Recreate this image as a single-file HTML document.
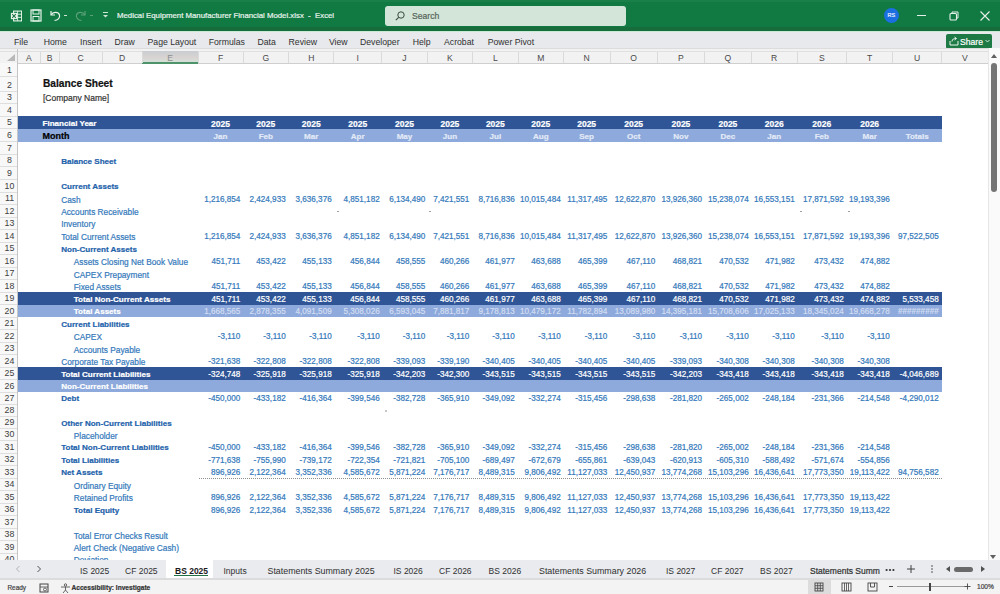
<!DOCTYPE html><html><head><meta charset="utf-8"><style>
*{margin:0;padding:0;box-sizing:border-box}
html,body{width:1000px;height:594px;overflow:hidden;background:#fff;font-family:"Liberation Sans", sans-serif}
.a{position:absolute;white-space:nowrap}
.t{position:absolute;white-space:nowrap;line-height:1;-webkit-text-stroke:0.2px currentColor}
.n{-webkit-text-stroke:0}

</style></head><body>
<div class="a" style="left:0;top:0;width:1000px;height:31px;background:#117a43"></div>
<div class="a" style="left:0;top:0;width:1000px;height:2px;background:#1a8049"></div>
<div class="a" style="left:0;top:27px;width:1000px;height:3.5px;background:#176c3c"></div>
<div class="a" style="left:0;top:30.5px;width:1000px;height:1px;background:#b8e2c6"></div>
<div class="a" style="left:0;top:31px;width:1000px;height:17px;background:#e7e9ec"></div>
<div class="a" style="left:0;top:30.8px;width:1000px;height:1px;background:#c9ead5"></div>
<div class="t n" style="left:14px;top:37.7px;font-size:8.7px;color:#303030">File</div>
<div class="t n" style="left:43.7px;top:37.7px;font-size:8.7px;color:#303030">Home</div>
<div class="t n" style="left:80px;top:37.7px;font-size:8.7px;color:#303030">Insert</div>
<div class="t n" style="left:114.5px;top:37.7px;font-size:8.7px;color:#303030">Draw</div>
<div class="t n" style="left:147.5px;top:37.7px;font-size:8.7px;color:#303030">Page Layout</div>
<div class="t n" style="left:208.7px;top:37.7px;font-size:8.7px;color:#303030">Formulas</div>
<div class="t n" style="left:257.4px;top:37.7px;font-size:8.7px;color:#303030">Data</div>
<div class="t n" style="left:288.6px;top:37.7px;font-size:8.7px;color:#303030">Review</div>
<div class="t n" style="left:328.9px;top:37.7px;font-size:8.7px;color:#303030">View</div>
<div class="t n" style="left:360px;top:37.7px;font-size:8.7px;color:#303030">Developer</div>
<div class="t n" style="left:412.7px;top:37.7px;font-size:8.7px;color:#303030">Help</div>
<div class="t n" style="left:444px;top:37.7px;font-size:8.7px;color:#303030">Acrobat</div>
<div class="t n" style="left:487.7px;top:37.7px;font-size:8.7px;color:#303030">Power Pivot</div>
<div class="t" style="left:117px;top:11.5px;font-size:7.8px;color:#e8f3ec">Medical Equipment Manufacturer Financial Model.xlsx&nbsp; - &nbsp;Excel</div>
<div class="a" style="left:385px;top:5.5px;width:240.5px;height:20.5px;background:#d3e4d8;border-radius:3px"></div>
<svg class="a" style="left:394px;top:10px" width="12" height="12" viewBox="0 0 12 12"><circle cx="7" cy="5" r="3.2" fill="none" stroke="#3b4a40" stroke-width="1"/><line x1="4.7" y1="7.3" x2="1.8" y2="10.2" stroke="#3b4a40" stroke-width="1.1"/></svg>
<div class="t" style="left:412px;top:11.5px;font-size:8.6px;color:#56655b">Search</div>
<div class="a" style="left:883.8px;top:7.7px;width:15.4px;height:15.4px;border-radius:50%;background:#1b6fe0"></div>
<div class="t" style="left:887.5px;top:12.6px;font-size:5.5px;color:#e8f0ff">RS</div>
<div class="a" style="left:917px;top:15px;width:9px;height:1px;background:#e6f0ea"></div>
<svg class="a" style="left:948px;top:10px" width="12" height="12" viewBox="0 0 12 12"><rect x="2" y="3.5" width="6.5" height="6.5" fill="none" stroke="#e6f0ea" stroke-width="1.1" rx="1"/><path d="M4 3.5 V2 H10 V8 H8.5" fill="none" stroke="#e6f0ea" stroke-width="1"/></svg>
<svg class="a" style="left:979px;top:9.5px" width="12" height="12" viewBox="0 0 12 12"><path d="M1.5 1.5 L10.5 10.5 M10.5 1.5 L1.5 10.5" stroke="#e6f0ea" stroke-width="1.1"/></svg>
<svg class="a" style="left:9.5px;top:9.5px" width="12.5" height="12" viewBox="0 0 14 13"><rect x="4" y="1" width="9" height="11" fill="none" stroke="#e8f4ec" stroke-width="1.2"/><line x1="4" y1="4.5" x2="13" y2="4.5" stroke="#e8f4ec" stroke-width="1"/><line x1="4" y1="8" x2="13" y2="8" stroke="#e8f4ec" stroke-width="1"/><line x1="8.5" y1="1" x2="8.5" y2="12" stroke="#e8f4ec" stroke-width="1"/><rect x="1" y="3" width="7" height="7" fill="#e8f4ec"/><path d="M2.5 4.5 L6.5 8.5 M6.5 4.5 L2.5 8.5" stroke="#18743f" stroke-width="1.2"/></svg>
<svg class="a" style="left:30px;top:9px" width="12" height="13" viewBox="0 0 12 13"><rect x="1" y="1" width="10" height="11" fill="none" stroke="#e8f4ec" stroke-width="1.2"/><rect x="3" y="1" width="6" height="4" fill="none" stroke="#e8f4ec" stroke-width="1"/><rect x="3" y="7.5" width="6" height="4.5" fill="none" stroke="#e8f4ec" stroke-width="1"/></svg>
<svg class="a" style="left:49px;top:9px" width="13" height="13" viewBox="0 0 13 13"><path d="M2 2 V6 H6" fill="none" stroke="#e8f4ec" stroke-width="1.2"/><path d="M2.3 5.8 C4 2.5 9.5 2.5 10.5 6 C11.3 9 8.5 11.5 5.5 11.5" fill="none" stroke="#e8f4ec" stroke-width="1.2"/></svg>
<div class="a" style="left:64px;top:15px;width:3px;height:1px;background:#cfe3d6"></div>
<svg class="a" style="left:74px;top:9px" width="13" height="13" viewBox="0 0 13 13"><path d="M11 2 V6 H7" fill="none" stroke="#5d9f78" stroke-width="1.2"/><path d="M10.7 5.8 C9 2.5 3.5 2.5 2.5 6 C1.7 9 4.5 11.5 7.5 11.5" fill="none" stroke="#5d9f78" stroke-width="1.2"/></svg>
<div class="a" style="left:90px;top:15px;width:3px;height:1px;background:#5d9f78"></div>
<svg class="a" style="left:102px;top:11px" width="7" height="8" viewBox="0 0 7 8"><line x1="1" y1="1.5" x2="6" y2="1.5" stroke="#cfe3d6" stroke-width="1"/><path d="M1 4 L3.5 6.5 L6 4 Z" fill="#cfe3d6"/></svg>
<div class="a" style="left:946px;top:33.6px;width:46.4px;height:15.4px;background:#1d7a45;border-radius:2px"></div>
<svg class="a" style="left:949px;top:36px" width="10" height="10" viewBox="0 0 10 10"><path d="M1 5 V9 H9 V5" fill="none" stroke="#e8f4ec" stroke-width="1"/><path d="M3 5.5 C3 3 5 2.5 7 2.5 M5.5 1 L7.5 2.5 L5.5 4" fill="none" stroke="#e8f4ec" stroke-width="1"/></svg>
<div class="t" style="left:960px;top:37.5px;font-size:8.6px;color:#ffffff">Share</div>
<svg class="a" style="left:985px;top:39px" width="5" height="4" viewBox="0 0 5 4"><path d="M0.5 1 L2.5 3 L4.5 1" fill="none" stroke="#e8f4ec" stroke-width="0.9"/></svg>
<div class="a" style="left:0;top:47.5px;width:1000px;height:16.3px;background:#f2f2f2;border-bottom:1px solid #cfcfcf"></div>
<div class="a" style="left:0;top:48px;width:1000px;height:1px;background:#dcdcdc"></div>
<div class="a" style="left:0;top:51px;width:1000px;height:1px;background:#e0e0e0"></div>
<svg class="a" style="left:5px;top:53px" width="11" height="9" viewBox="0 0 11 9"><path d="M10 1 L10 8 L2 8 Z" fill="#b8b8b8"/></svg>
<div class="a" style="left:142px;top:50.8px;width:56.099999999999994px;height:12.8px;background:linear-gradient(#c9cdd1,#d9d3d3 50%,#d3e6d8)"></div>
<div class="a" style="left:142px;top:62px;width:56.099999999999994px;height:1.6px;background:#4f936a"></div>
<div class="a" style="left:39.5px;top:52px;width:1px;height:11px;background:#dadada"></div>
<div class="t n" style="left:17.5px;top:54.0px;width:22.5px;text-align:center;font-size:8.6px;color:#4a4a4a">A</div>
<div class="a" style="left:58.5px;top:52px;width:1px;height:11px;background:#dadada"></div>
<div class="t n" style="left:40px;top:54.0px;width:19px;text-align:center;font-size:8.6px;color:#4a4a4a">B</div>
<div class="a" style="left:101.5px;top:52px;width:1px;height:11px;background:#dadada"></div>
<div class="t n" style="left:59px;top:54.0px;width:43px;text-align:center;font-size:8.6px;color:#4a4a4a">C</div>
<div class="a" style="left:141.5px;top:52px;width:1px;height:11px;background:#dadada"></div>
<div class="t n" style="left:102px;top:54.0px;width:40px;text-align:center;font-size:8.6px;color:#4a4a4a">D</div>
<div class="a" style="left:197.6px;top:52px;width:1px;height:11px;background:#dadada"></div>
<div class="t n" style="left:142px;top:54.0px;width:56.099999999999994px;text-align:center;font-size:8.6px;color:#8a8f8c">E</div>
<div class="a" style="left:242.5px;top:52px;width:1px;height:11px;background:#dadada"></div>
<div class="t n" style="left:198.1px;top:54.0px;width:44.900000000000006px;text-align:center;font-size:8.6px;color:#4a4a4a">F</div>
<div class="a" style="left:288.1px;top:52px;width:1px;height:11px;background:#dadada"></div>
<div class="t n" style="left:243px;top:54.0px;width:45.60000000000002px;text-align:center;font-size:8.6px;color:#4a4a4a">G</div>
<div class="a" style="left:333.4px;top:52px;width:1px;height:11px;background:#dadada"></div>
<div class="t n" style="left:288.6px;top:54.0px;width:45.299999999999955px;text-align:center;font-size:8.6px;color:#4a4a4a">H</div>
<div class="a" style="left:381.1px;top:52px;width:1px;height:11px;background:#dadada"></div>
<div class="t n" style="left:333.9px;top:54.0px;width:47.700000000000045px;text-align:center;font-size:8.6px;color:#4a4a4a">I</div>
<div class="a" style="left:426.9px;top:52px;width:1px;height:11px;background:#dadada"></div>
<div class="t n" style="left:381.6px;top:54.0px;width:45.799999999999955px;text-align:center;font-size:8.6px;color:#4a4a4a">J</div>
<div class="a" style="left:471.9px;top:52px;width:1px;height:11px;background:#dadada"></div>
<div class="t n" style="left:427.4px;top:54.0px;width:45.0px;text-align:center;font-size:8.6px;color:#4a4a4a">K</div>
<div class="a" style="left:517.8px;top:52px;width:1px;height:11px;background:#dadada"></div>
<div class="t n" style="left:472.4px;top:54.0px;width:45.89999999999998px;text-align:center;font-size:8.6px;color:#4a4a4a">L</div>
<div class="a" style="left:562.8px;top:52px;width:1px;height:11px;background:#dadada"></div>
<div class="t n" style="left:518.3px;top:54.0px;width:45.0px;text-align:center;font-size:8.6px;color:#4a4a4a">M</div>
<div class="a" style="left:609.5px;top:52px;width:1px;height:11px;background:#dadada"></div>
<div class="t n" style="left:563.3px;top:54.0px;width:46.700000000000045px;text-align:center;font-size:8.6px;color:#4a4a4a">N</div>
<div class="a" style="left:656.8px;top:52px;width:1px;height:11px;background:#dadada"></div>
<div class="t n" style="left:610px;top:54.0px;width:47.299999999999955px;text-align:center;font-size:8.6px;color:#4a4a4a">O</div>
<div class="a" style="left:704.0px;top:52px;width:1px;height:11px;background:#dadada"></div>
<div class="t n" style="left:657.3px;top:54.0px;width:47.200000000000045px;text-align:center;font-size:8.6px;color:#4a4a4a">P</div>
<div class="a" style="left:750.8px;top:52px;width:1px;height:11px;background:#dadada"></div>
<div class="t n" style="left:704.5px;top:54.0px;width:46.799999999999955px;text-align:center;font-size:8.6px;color:#4a4a4a">Q</div>
<div class="a" style="left:796.6px;top:52px;width:1px;height:11px;background:#dadada"></div>
<div class="t n" style="left:751.3px;top:54.0px;width:45.80000000000007px;text-align:center;font-size:8.6px;color:#4a4a4a">R</div>
<div class="a" style="left:846.0px;top:52px;width:1px;height:11px;background:#dadada"></div>
<div class="t n" style="left:797.1px;top:54.0px;width:49.39999999999998px;text-align:center;font-size:8.6px;color:#4a4a4a">S</div>
<div class="a" style="left:892.3px;top:52px;width:1px;height:11px;background:#dadada"></div>
<div class="t n" style="left:846.5px;top:54.0px;width:46.299999999999955px;text-align:center;font-size:8.6px;color:#4a4a4a">T</div>
<div class="a" style="left:941.1px;top:52px;width:1px;height:11px;background:#dadada"></div>
<div class="t n" style="left:892.8px;top:54.0px;width:48.80000000000007px;text-align:center;font-size:8.6px;color:#4a4a4a">U</div>
<div class="a" style="left:987.5px;top:52px;width:1px;height:11px;background:#dadada"></div>
<div class="t n" style="left:941.6px;top:54.0px;width:46.39999999999998px;text-align:center;font-size:8.6px;color:#4a4a4a">V</div>
<div class="a" style="left:0;top:63.3px;width:17.3px;height:497px;background:#f8f8f8"></div>
<div class="a" style="left:17px;top:49px;width:1px;height:511px;background:#c6c6c6"></div>
<div class="a" style="left:0;top:75.70px;width:17px;height:1px;background:#dedede"></div>
<div class="t n" style="left:0.5px;top:65.75px;width:18px;text-align:center;font-size:8.8px;color:#404040">1</div>
<div class="a" style="left:0;top:90.80px;width:17px;height:1px;background:#dedede"></div>
<div class="t n" style="left:0.5px;top:80.85px;width:18px;text-align:center;font-size:8.8px;color:#404040">2</div>
<div class="a" style="left:0;top:102.90px;width:17px;height:1px;background:#dedede"></div>
<div class="t n" style="left:0.5px;top:92.95px;width:18px;text-align:center;font-size:8.8px;color:#404040">3</div>
<div class="a" style="left:0;top:115.50px;width:17px;height:1px;background:#dedede"></div>
<div class="t n" style="left:0.5px;top:105.55px;width:18px;text-align:center;font-size:8.8px;color:#404040">4</div>
<div class="a" style="left:0;top:128.40px;width:17px;height:1px;background:#dedede"></div>
<div class="t n" style="left:0.5px;top:118.45px;width:18px;text-align:center;font-size:8.8px;color:#404040">5</div>
<div class="a" style="left:0;top:141.30px;width:17px;height:1px;background:#dedede"></div>
<div class="t n" style="left:0.5px;top:131.35px;width:18px;text-align:center;font-size:8.8px;color:#404040">6</div>
<div class="a" style="left:0;top:153.77px;width:17px;height:1px;background:#dedede"></div>
<div class="t n" style="left:0.5px;top:143.82px;width:18px;text-align:center;font-size:8.8px;color:#404040">7</div>
<div class="a" style="left:0;top:166.23px;width:17px;height:1px;background:#dedede"></div>
<div class="t n" style="left:0.5px;top:156.28px;width:18px;text-align:center;font-size:8.8px;color:#404040">8</div>
<div class="a" style="left:0;top:178.70px;width:17px;height:1px;background:#dedede"></div>
<div class="t n" style="left:0.5px;top:168.75px;width:18px;text-align:center;font-size:8.8px;color:#404040">9</div>
<div class="a" style="left:0;top:191.50px;width:17px;height:1px;background:#dedede"></div>
<div class="t n" style="left:0.5px;top:181.55px;width:18px;text-align:center;font-size:8.8px;color:#404040">10</div>
<div class="a" style="left:0;top:204.30px;width:17px;height:1px;background:#dedede"></div>
<div class="t n" style="left:0.5px;top:194.35px;width:18px;text-align:center;font-size:8.8px;color:#404040">11</div>
<div class="a" style="left:0;top:216.65px;width:17px;height:1px;background:#dedede"></div>
<div class="t n" style="left:0.5px;top:206.70px;width:18px;text-align:center;font-size:8.8px;color:#404040">12</div>
<div class="a" style="left:0;top:229.00px;width:17px;height:1px;background:#dedede"></div>
<div class="t n" style="left:0.5px;top:219.05px;width:18px;text-align:center;font-size:8.8px;color:#404040">13</div>
<div class="a" style="left:0;top:241.56px;width:17px;height:1px;background:#dedede"></div>
<div class="t n" style="left:0.5px;top:231.61px;width:18px;text-align:center;font-size:8.8px;color:#404040">14</div>
<div class="a" style="left:0;top:254.12px;width:17px;height:1px;background:#dedede"></div>
<div class="t n" style="left:0.5px;top:244.17px;width:18px;text-align:center;font-size:8.8px;color:#404040">15</div>
<div class="a" style="left:0;top:266.68px;width:17px;height:1px;background:#dedede"></div>
<div class="t n" style="left:0.5px;top:256.73px;width:18px;text-align:center;font-size:8.8px;color:#404040">16</div>
<div class="a" style="left:0;top:279.24px;width:17px;height:1px;background:#dedede"></div>
<div class="t n" style="left:0.5px;top:269.29px;width:18px;text-align:center;font-size:8.8px;color:#404040">17</div>
<div class="a" style="left:0;top:291.80px;width:17px;height:1px;background:#dedede"></div>
<div class="t n" style="left:0.5px;top:281.85px;width:18px;text-align:center;font-size:8.8px;color:#404040">18</div>
<div class="a" style="left:0;top:304.27px;width:17px;height:1px;background:#dedede"></div>
<div class="t n" style="left:0.5px;top:294.32px;width:18px;text-align:center;font-size:8.8px;color:#404040">19</div>
<div class="a" style="left:0;top:316.73px;width:17px;height:1px;background:#dedede"></div>
<div class="t n" style="left:0.5px;top:306.78px;width:18px;text-align:center;font-size:8.8px;color:#404040">20</div>
<div class="a" style="left:0;top:329.20px;width:17px;height:1px;background:#dedede"></div>
<div class="t n" style="left:0.5px;top:319.25px;width:18px;text-align:center;font-size:8.8px;color:#404040">21</div>
<div class="a" style="left:0;top:341.67px;width:17px;height:1px;background:#dedede"></div>
<div class="t n" style="left:0.5px;top:331.72px;width:18px;text-align:center;font-size:8.8px;color:#404040">22</div>
<div class="a" style="left:0;top:354.13px;width:17px;height:1px;background:#dedede"></div>
<div class="t n" style="left:0.5px;top:344.18px;width:18px;text-align:center;font-size:8.8px;color:#404040">23</div>
<div class="a" style="left:0;top:366.60px;width:17px;height:1px;background:#dedede"></div>
<div class="t n" style="left:0.5px;top:356.65px;width:18px;text-align:center;font-size:8.8px;color:#404040">24</div>
<div class="a" style="left:0;top:379.15px;width:17px;height:1px;background:#dedede"></div>
<div class="t n" style="left:0.5px;top:369.20px;width:18px;text-align:center;font-size:8.8px;color:#404040">25</div>
<div class="a" style="left:0;top:391.70px;width:17px;height:1px;background:#dedede"></div>
<div class="t n" style="left:0.5px;top:381.75px;width:18px;text-align:center;font-size:8.8px;color:#404040">26</div>
<div class="a" style="left:0;top:403.77px;width:17px;height:1px;background:#dedede"></div>
<div class="t n" style="left:0.5px;top:393.82px;width:18px;text-align:center;font-size:8.8px;color:#404040">27</div>
<div class="a" style="left:0;top:415.83px;width:17px;height:1px;background:#dedede"></div>
<div class="t n" style="left:0.5px;top:405.88px;width:18px;text-align:center;font-size:8.8px;color:#404040">28</div>
<div class="a" style="left:0;top:427.90px;width:17px;height:1px;background:#dedede"></div>
<div class="t n" style="left:0.5px;top:417.95px;width:18px;text-align:center;font-size:8.8px;color:#404040">29</div>
<div class="a" style="left:0;top:440.25px;width:17px;height:1px;background:#dedede"></div>
<div class="t n" style="left:0.5px;top:430.30px;width:18px;text-align:center;font-size:8.8px;color:#404040">30</div>
<div class="a" style="left:0;top:452.60px;width:17px;height:1px;background:#dedede"></div>
<div class="t n" style="left:0.5px;top:442.65px;width:18px;text-align:center;font-size:8.8px;color:#404040">31</div>
<div class="a" style="left:0;top:465.10px;width:17px;height:1px;background:#dedede"></div>
<div class="t n" style="left:0.5px;top:455.15px;width:18px;text-align:center;font-size:8.8px;color:#404040">32</div>
<div class="a" style="left:0;top:477.60px;width:17px;height:1px;background:#dedede"></div>
<div class="t n" style="left:0.5px;top:467.65px;width:18px;text-align:center;font-size:8.8px;color:#404040">33</div>
<div class="a" style="left:0;top:490.15px;width:17px;height:1px;background:#dedede"></div>
<div class="t n" style="left:0.5px;top:480.20px;width:18px;text-align:center;font-size:8.8px;color:#404040">34</div>
<div class="a" style="left:0;top:502.70px;width:17px;height:1px;background:#dedede"></div>
<div class="t n" style="left:0.5px;top:492.75px;width:18px;text-align:center;font-size:8.8px;color:#404040">35</div>
<div class="a" style="left:0;top:515.25px;width:17px;height:1px;background:#dedede"></div>
<div class="t n" style="left:0.5px;top:505.30px;width:18px;text-align:center;font-size:8.8px;color:#404040">36</div>
<div class="a" style="left:0;top:527.80px;width:17px;height:1px;background:#dedede"></div>
<div class="t n" style="left:0.5px;top:517.85px;width:18px;text-align:center;font-size:8.8px;color:#404040">37</div>
<div class="a" style="left:0;top:540.15px;width:17px;height:1px;background:#dedede"></div>
<div class="t n" style="left:0.5px;top:530.20px;width:18px;text-align:center;font-size:8.8px;color:#404040">38</div>
<div class="a" style="left:0;top:552.50px;width:17px;height:1px;background:#dedede"></div>
<div class="t n" style="left:0.5px;top:542.55px;width:18px;text-align:center;font-size:8.8px;color:#404040">39</div>
<div class="a" style="left:0;top:564.95px;width:17px;height:1px;background:#dedede"></div>
<div class="t n" style="left:0.5px;top:555.00px;width:18px;text-align:center;font-size:8.8px;color:#404040">40</div>
<div class="t" style="left:43px;top:79.1px;font-size:10.2px;font-weight:bold;color:#111">Balance Sheet</div>
<div class="t" style="left:43px;top:94.3px;font-size:8.5px;color:#333">[Company Name]</div>
<div class="a" style="left:17.5px;top:116.00px;width:924.5px;height:12.90px;background:#2f5597"></div>
<div class="a" style="left:17.5px;top:128.90px;width:924.5px;height:12.90px;background:#8ea9db"></div>
<div class="a" style="left:17.5px;top:292.30px;width:924.5px;height:12.47px;background:#2f5597"></div>
<div class="a" style="left:17.5px;top:304.77px;width:924.5px;height:12.47px;background:#8ea9db"></div>
<div class="a" style="left:17.5px;top:367.10px;width:924.5px;height:12.55px;background:#2f5597"></div>
<div class="a" style="left:17.5px;top:379.65px;width:924.5px;height:12.55px;background:#8ea9db"></div>
<div class="t" style="left:42.5px;top:120.09px;font-size:8.05px;color:#ffffff;font-weight:bold;">Financial Year</div>
<div class="t" style="left:42.5px;top:132.18px;font-size:9.0px;color:#000000;font-weight:bold;">Month</div>
<div class="t" style="left:120.55000000000001px;width:200px;text-align:center;top:119.70px;font-size:8.5px;color:#ffffff;font-weight:bold;">2025</div>
<div class="t" style="left:120.55000000000001px;width:200px;text-align:center;top:132.99px;font-size:8.05px;color:#e3eaf7;font-weight:bold;">Jan</div>
<div class="t" style="left:165.8px;width:200px;text-align:center;top:119.70px;font-size:8.5px;color:#ffffff;font-weight:bold;">2025</div>
<div class="t" style="left:165.8px;width:200px;text-align:center;top:132.99px;font-size:8.05px;color:#e3eaf7;font-weight:bold;">Feb</div>
<div class="t" style="left:211.25px;width:200px;text-align:center;top:119.70px;font-size:8.5px;color:#ffffff;font-weight:bold;">2025</div>
<div class="t" style="left:211.25px;width:200px;text-align:center;top:132.99px;font-size:8.05px;color:#e3eaf7;font-weight:bold;">Mar</div>
<div class="t" style="left:257.75px;width:200px;text-align:center;top:119.70px;font-size:8.5px;color:#ffffff;font-weight:bold;">2025</div>
<div class="t" style="left:257.75px;width:200px;text-align:center;top:132.99px;font-size:8.05px;color:#e3eaf7;font-weight:bold;">Apr</div>
<div class="t" style="left:304.5px;width:200px;text-align:center;top:119.70px;font-size:8.5px;color:#ffffff;font-weight:bold;">2025</div>
<div class="t" style="left:304.5px;width:200px;text-align:center;top:132.99px;font-size:8.05px;color:#e3eaf7;font-weight:bold;">May</div>
<div class="t" style="left:349.9px;width:200px;text-align:center;top:119.70px;font-size:8.5px;color:#ffffff;font-weight:bold;">2025</div>
<div class="t" style="left:349.9px;width:200px;text-align:center;top:132.99px;font-size:8.05px;color:#e3eaf7;font-weight:bold;">Jun</div>
<div class="t" style="left:395.34999999999997px;width:200px;text-align:center;top:119.70px;font-size:8.5px;color:#ffffff;font-weight:bold;">2025</div>
<div class="t" style="left:395.34999999999997px;width:200px;text-align:center;top:132.99px;font-size:8.05px;color:#e3eaf7;font-weight:bold;">Jul</div>
<div class="t" style="left:440.79999999999995px;width:200px;text-align:center;top:119.70px;font-size:8.5px;color:#ffffff;font-weight:bold;">2025</div>
<div class="t" style="left:440.79999999999995px;width:200px;text-align:center;top:132.99px;font-size:8.05px;color:#e3eaf7;font-weight:bold;">Aug</div>
<div class="t" style="left:486.65px;width:200px;text-align:center;top:119.70px;font-size:8.5px;color:#ffffff;font-weight:bold;">2025</div>
<div class="t" style="left:486.65px;width:200px;text-align:center;top:132.99px;font-size:8.05px;color:#e3eaf7;font-weight:bold;">Sep</div>
<div class="t" style="left:533.65px;width:200px;text-align:center;top:119.70px;font-size:8.5px;color:#ffffff;font-weight:bold;">2025</div>
<div class="t" style="left:533.65px;width:200px;text-align:center;top:132.99px;font-size:8.05px;color:#e3eaf7;font-weight:bold;">Oct</div>
<div class="t" style="left:580.9px;width:200px;text-align:center;top:119.70px;font-size:8.5px;color:#ffffff;font-weight:bold;">2025</div>
<div class="t" style="left:580.9px;width:200px;text-align:center;top:132.99px;font-size:8.05px;color:#e3eaf7;font-weight:bold;">Nov</div>
<div class="t" style="left:627.9px;width:200px;text-align:center;top:119.70px;font-size:8.5px;color:#ffffff;font-weight:bold;">2025</div>
<div class="t" style="left:627.9px;width:200px;text-align:center;top:132.99px;font-size:8.05px;color:#e3eaf7;font-weight:bold;">Dec</div>
<div class="t" style="left:674.2px;width:200px;text-align:center;top:119.70px;font-size:8.5px;color:#ffffff;font-weight:bold;">2026</div>
<div class="t" style="left:674.2px;width:200px;text-align:center;top:132.99px;font-size:8.05px;color:#e3eaf7;font-weight:bold;">Jan</div>
<div class="t" style="left:721.8px;width:200px;text-align:center;top:119.70px;font-size:8.5px;color:#ffffff;font-weight:bold;">2026</div>
<div class="t" style="left:721.8px;width:200px;text-align:center;top:132.99px;font-size:8.05px;color:#e3eaf7;font-weight:bold;">Feb</div>
<div class="t" style="left:769.65px;width:200px;text-align:center;top:119.70px;font-size:8.5px;color:#ffffff;font-weight:bold;">2026</div>
<div class="t" style="left:769.65px;width:200px;text-align:center;top:132.99px;font-size:8.05px;color:#e3eaf7;font-weight:bold;">Mar</div>
<div class="t" style="left:817.2px;width:200px;text-align:center;top:132.99px;font-size:8.05px;color:#e3eaf7;font-weight:bold;">Totals</div>
<div class="t" style="left:61.2px;top:157.92px;font-size:8.05px;color:#1e62ab;font-weight:bold;">Balance Sheet</div>
<div class="t" style="left:61.2px;top:183.19px;font-size:8.05px;color:#1e62ab;font-weight:bold;">Current Assets</div>
<div class="t" style="left:61.2px;top:195.77px;font-size:8.3px;color:#3479bb;">Cash</div>
<div class="t" style="left:61.2px;top:208.12px;font-size:8.3px;color:#3479bb;">Accounts Receivable</div>
<div class="t" style="left:61.2px;top:220.47px;font-size:8.3px;color:#3479bb;">Inventory</div>
<div class="t" style="left:61.2px;top:233.03px;font-size:8.3px;color:#3479bb;">Total Current Assets</div>
<div class="t" style="left:61.2px;top:245.81px;font-size:8.05px;color:#1e62ab;font-weight:bold;">Non-Current Assets</div>
<div class="t" style="left:73.8px;top:258.15px;font-size:8.3px;color:#3479bb;">Assets Closing Net Book Value</div>
<div class="t" style="left:73.8px;top:270.71px;font-size:8.3px;color:#3479bb;">CAPEX Prepayment</div>
<div class="t" style="left:73.8px;top:283.27px;font-size:8.3px;color:#3479bb;">Fixed Assets</div>
<div class="t" style="left:73.8px;top:295.95px;font-size:8.05px;color:#ffffff;font-weight:bold;">Total Non-Current Assets</div>
<div class="t" style="left:73.8px;top:308.42px;font-size:8.05px;color:#ffffff;font-weight:bold;">Total Assets</div>
<div class="t" style="left:61.2px;top:320.89px;font-size:8.05px;color:#1e62ab;font-weight:bold;">Current Liabilities</div>
<div class="t" style="left:73.8px;top:333.14px;font-size:8.3px;color:#3479bb;">CAPEX</div>
<div class="t" style="left:73.8px;top:345.61px;font-size:8.3px;color:#3479bb;">Accounts Payable</div>
<div class="t" style="left:61.2px;top:358.07px;font-size:8.3px;color:#3479bb;">Corporate Tax Payable</div>
<div class="t" style="left:61.2px;top:370.84px;font-size:8.05px;color:#ffffff;font-weight:bold;">Total Current Liabilities</div>
<div class="t" style="left:61.2px;top:383.39px;font-size:8.05px;color:#ffffff;font-weight:bold;">Non-Current Liabilities</div>
<div class="t" style="left:61.2px;top:395.45px;font-size:8.05px;color:#1e62ab;font-weight:bold;">Debt</div>
<div class="t" style="left:61.2px;top:419.59px;font-size:8.05px;color:#1e62ab;font-weight:bold;">Other Non-Current Liabilities</div>
<div class="t" style="left:73.8px;top:431.72px;font-size:8.3px;color:#3479bb;">Placeholder</div>
<div class="t" style="left:61.2px;top:444.29px;font-size:8.05px;color:#1e62ab;font-weight:bold;">Total Non-Current Liabilities</div>
<div class="t" style="left:61.2px;top:456.79px;font-size:8.05px;color:#1e62ab;font-weight:bold;">Total Liabilities</div>
<div class="t" style="left:61.2px;top:469.29px;font-size:8.05px;color:#1e62ab;font-weight:bold;">Net Assets</div>
<div class="t" style="left:73.8px;top:481.62px;font-size:8.3px;color:#3479bb;">Ordinary Equity</div>
<div class="t" style="left:73.8px;top:494.17px;font-size:8.3px;color:#3479bb;">Retained Profits</div>
<div class="t" style="left:73.8px;top:506.94px;font-size:8.05px;color:#1e62ab;font-weight:bold;">Total Equity</div>
<div class="t" style="left:73.8px;top:531.62px;font-size:8.3px;color:#3479bb;">Total Error Checks Result</div>
<div class="t" style="left:73.8px;top:543.97px;font-size:8.3px;color:#3479bb;">Alert Check (Negative Cash)</div>
<div class="t" style="left:73.8px;top:556.42px;font-size:8.3px;color:#3479bb;">Deviation</div>
<div class="t" style="left:40.29999999999998px;width:200px;text-align:right;top:195.90px;font-size:8.15px;color:#3479bb;">1,216,854</div>
<div class="t" style="left:85.69999999999999px;width:200px;text-align:right;top:195.90px;font-size:8.15px;color:#3479bb;">2,424,933</div>
<div class="t" style="left:131.7px;width:200px;text-align:right;top:195.90px;font-size:8.15px;color:#3479bb;">3,636,376</div>
<div class="t" style="left:179.7px;width:200px;text-align:right;top:195.90px;font-size:8.15px;color:#3479bb;">4,851,182</div>
<div class="t" style="left:225.3px;width:200px;text-align:right;top:195.90px;font-size:8.15px;color:#3479bb;">6,134,490</div>
<div class="t" style="left:269.3px;width:200px;text-align:right;top:195.90px;font-size:8.15px;color:#3479bb;">7,421,551</div>
<div class="t" style="left:314.70000000000005px;width:200px;text-align:right;top:195.90px;font-size:8.15px;color:#3479bb;">8,716,836</div>
<div class="t" style="left:360.70000000000005px;width:200px;text-align:right;top:195.90px;font-size:8.15px;color:#3479bb;">10,015,484</div>
<div class="t" style="left:407.30000000000007px;width:200px;text-align:right;top:195.90px;font-size:8.15px;color:#3479bb;">11,317,495</div>
<div class="t" style="left:455.30000000000007px;width:200px;text-align:right;top:195.90px;font-size:8.15px;color:#3479bb;">12,622,870</div>
<div class="t" style="left:502.1px;width:200px;text-align:right;top:195.90px;font-size:8.15px;color:#3479bb;">13,926,360</div>
<div class="t" style="left:548.7px;width:200px;text-align:right;top:195.90px;font-size:8.15px;color:#3479bb;">15,238,074</div>
<div class="t" style="left:594.7px;width:200px;text-align:right;top:195.90px;font-size:8.15px;color:#3479bb;">16,553,151</div>
<div class="t" style="left:643.7px;width:200px;text-align:right;top:195.90px;font-size:8.15px;color:#3479bb;">17,871,592</div>
<div class="t" style="left:689.7px;width:200px;text-align:right;top:195.90px;font-size:8.15px;color:#3479bb;">19,193,396</div>
<div class="t" style="left:40.29999999999998px;width:200px;text-align:right;top:233.16px;font-size:8.15px;color:#3479bb;">1,216,854</div>
<div class="t" style="left:85.69999999999999px;width:200px;text-align:right;top:233.16px;font-size:8.15px;color:#3479bb;">2,424,933</div>
<div class="t" style="left:131.7px;width:200px;text-align:right;top:233.16px;font-size:8.15px;color:#3479bb;">3,636,376</div>
<div class="t" style="left:179.7px;width:200px;text-align:right;top:233.16px;font-size:8.15px;color:#3479bb;">4,851,182</div>
<div class="t" style="left:225.3px;width:200px;text-align:right;top:233.16px;font-size:8.15px;color:#3479bb;">6,134,490</div>
<div class="t" style="left:269.3px;width:200px;text-align:right;top:233.16px;font-size:8.15px;color:#3479bb;">7,421,551</div>
<div class="t" style="left:314.70000000000005px;width:200px;text-align:right;top:233.16px;font-size:8.15px;color:#3479bb;">8,716,836</div>
<div class="t" style="left:360.70000000000005px;width:200px;text-align:right;top:233.16px;font-size:8.15px;color:#3479bb;">10,015,484</div>
<div class="t" style="left:407.30000000000007px;width:200px;text-align:right;top:233.16px;font-size:8.15px;color:#3479bb;">11,317,495</div>
<div class="t" style="left:455.30000000000007px;width:200px;text-align:right;top:233.16px;font-size:8.15px;color:#3479bb;">12,622,870</div>
<div class="t" style="left:502.1px;width:200px;text-align:right;top:233.16px;font-size:8.15px;color:#3479bb;">13,926,360</div>
<div class="t" style="left:548.7px;width:200px;text-align:right;top:233.16px;font-size:8.15px;color:#3479bb;">15,238,074</div>
<div class="t" style="left:594.7px;width:200px;text-align:right;top:233.16px;font-size:8.15px;color:#3479bb;">16,553,151</div>
<div class="t" style="left:643.7px;width:200px;text-align:right;top:233.16px;font-size:8.15px;color:#3479bb;">17,871,592</div>
<div class="t" style="left:689.7px;width:200px;text-align:right;top:233.16px;font-size:8.15px;color:#3479bb;">19,193,396</div>
<div class="t" style="left:738.7px;width:200px;text-align:right;top:233.16px;font-size:8.15px;color:#3479bb;">97,522,505</div>
<div class="t" style="left:40.29999999999998px;width:200px;text-align:right;top:258.28px;font-size:8.15px;color:#3479bb;">451,711</div>
<div class="t" style="left:85.69999999999999px;width:200px;text-align:right;top:258.28px;font-size:8.15px;color:#3479bb;">453,422</div>
<div class="t" style="left:131.7px;width:200px;text-align:right;top:258.28px;font-size:8.15px;color:#3479bb;">455,133</div>
<div class="t" style="left:179.7px;width:200px;text-align:right;top:258.28px;font-size:8.15px;color:#3479bb;">456,844</div>
<div class="t" style="left:225.3px;width:200px;text-align:right;top:258.28px;font-size:8.15px;color:#3479bb;">458,555</div>
<div class="t" style="left:269.3px;width:200px;text-align:right;top:258.28px;font-size:8.15px;color:#3479bb;">460,266</div>
<div class="t" style="left:314.70000000000005px;width:200px;text-align:right;top:258.28px;font-size:8.15px;color:#3479bb;">461,977</div>
<div class="t" style="left:360.70000000000005px;width:200px;text-align:right;top:258.28px;font-size:8.15px;color:#3479bb;">463,688</div>
<div class="t" style="left:407.30000000000007px;width:200px;text-align:right;top:258.28px;font-size:8.15px;color:#3479bb;">465,399</div>
<div class="t" style="left:455.30000000000007px;width:200px;text-align:right;top:258.28px;font-size:8.15px;color:#3479bb;">467,110</div>
<div class="t" style="left:502.1px;width:200px;text-align:right;top:258.28px;font-size:8.15px;color:#3479bb;">468,821</div>
<div class="t" style="left:548.7px;width:200px;text-align:right;top:258.28px;font-size:8.15px;color:#3479bb;">470,532</div>
<div class="t" style="left:594.7px;width:200px;text-align:right;top:258.28px;font-size:8.15px;color:#3479bb;">471,982</div>
<div class="t" style="left:643.7px;width:200px;text-align:right;top:258.28px;font-size:8.15px;color:#3479bb;">473,432</div>
<div class="t" style="left:689.7px;width:200px;text-align:right;top:258.28px;font-size:8.15px;color:#3479bb;">474,882</div>
<div class="t" style="left:40.29999999999998px;width:200px;text-align:right;top:283.40px;font-size:8.15px;color:#3479bb;">451,711</div>
<div class="t" style="left:85.69999999999999px;width:200px;text-align:right;top:283.40px;font-size:8.15px;color:#3479bb;">453,422</div>
<div class="t" style="left:131.7px;width:200px;text-align:right;top:283.40px;font-size:8.15px;color:#3479bb;">455,133</div>
<div class="t" style="left:179.7px;width:200px;text-align:right;top:283.40px;font-size:8.15px;color:#3479bb;">456,844</div>
<div class="t" style="left:225.3px;width:200px;text-align:right;top:283.40px;font-size:8.15px;color:#3479bb;">458,555</div>
<div class="t" style="left:269.3px;width:200px;text-align:right;top:283.40px;font-size:8.15px;color:#3479bb;">460,266</div>
<div class="t" style="left:314.70000000000005px;width:200px;text-align:right;top:283.40px;font-size:8.15px;color:#3479bb;">461,977</div>
<div class="t" style="left:360.70000000000005px;width:200px;text-align:right;top:283.40px;font-size:8.15px;color:#3479bb;">463,688</div>
<div class="t" style="left:407.30000000000007px;width:200px;text-align:right;top:283.40px;font-size:8.15px;color:#3479bb;">465,399</div>
<div class="t" style="left:455.30000000000007px;width:200px;text-align:right;top:283.40px;font-size:8.15px;color:#3479bb;">467,110</div>
<div class="t" style="left:502.1px;width:200px;text-align:right;top:283.40px;font-size:8.15px;color:#3479bb;">468,821</div>
<div class="t" style="left:548.7px;width:200px;text-align:right;top:283.40px;font-size:8.15px;color:#3479bb;">470,532</div>
<div class="t" style="left:594.7px;width:200px;text-align:right;top:283.40px;font-size:8.15px;color:#3479bb;">471,982</div>
<div class="t" style="left:643.7px;width:200px;text-align:right;top:283.40px;font-size:8.15px;color:#3479bb;">473,432</div>
<div class="t" style="left:689.7px;width:200px;text-align:right;top:283.40px;font-size:8.15px;color:#3479bb;">474,882</div>
<div class="t" style="left:40.29999999999998px;width:200px;text-align:right;top:295.87px;font-size:8.15px;color:#ffffff;">451,711</div>
<div class="t" style="left:85.69999999999999px;width:200px;text-align:right;top:295.87px;font-size:8.15px;color:#ffffff;">453,422</div>
<div class="t" style="left:131.7px;width:200px;text-align:right;top:295.87px;font-size:8.15px;color:#ffffff;">455,133</div>
<div class="t" style="left:179.7px;width:200px;text-align:right;top:295.87px;font-size:8.15px;color:#ffffff;">456,844</div>
<div class="t" style="left:225.3px;width:200px;text-align:right;top:295.87px;font-size:8.15px;color:#ffffff;">458,555</div>
<div class="t" style="left:269.3px;width:200px;text-align:right;top:295.87px;font-size:8.15px;color:#ffffff;">460,266</div>
<div class="t" style="left:314.70000000000005px;width:200px;text-align:right;top:295.87px;font-size:8.15px;color:#ffffff;">461,977</div>
<div class="t" style="left:360.70000000000005px;width:200px;text-align:right;top:295.87px;font-size:8.15px;color:#ffffff;">463,688</div>
<div class="t" style="left:407.30000000000007px;width:200px;text-align:right;top:295.87px;font-size:8.15px;color:#ffffff;">465,399</div>
<div class="t" style="left:455.30000000000007px;width:200px;text-align:right;top:295.87px;font-size:8.15px;color:#ffffff;">467,110</div>
<div class="t" style="left:502.1px;width:200px;text-align:right;top:295.87px;font-size:8.15px;color:#ffffff;">468,821</div>
<div class="t" style="left:548.7px;width:200px;text-align:right;top:295.87px;font-size:8.15px;color:#ffffff;">470,532</div>
<div class="t" style="left:594.7px;width:200px;text-align:right;top:295.87px;font-size:8.15px;color:#ffffff;">471,982</div>
<div class="t" style="left:643.7px;width:200px;text-align:right;top:295.87px;font-size:8.15px;color:#ffffff;">473,432</div>
<div class="t" style="left:689.7px;width:200px;text-align:right;top:295.87px;font-size:8.15px;color:#ffffff;">474,882</div>
<div class="t" style="left:738.7px;width:200px;text-align:right;top:295.87px;font-size:8.15px;color:#ffffff;">5,533,458</div>
<div class="t" style="left:40.29999999999998px;width:200px;text-align:right;top:308.33px;font-size:8.15px;color:#d3def2;">1,668,565</div>
<div class="t" style="left:85.69999999999999px;width:200px;text-align:right;top:308.33px;font-size:8.15px;color:#d3def2;">2,878,355</div>
<div class="t" style="left:131.7px;width:200px;text-align:right;top:308.33px;font-size:8.15px;color:#d3def2;">4,091,509</div>
<div class="t" style="left:179.7px;width:200px;text-align:right;top:308.33px;font-size:8.15px;color:#d3def2;">5,308,026</div>
<div class="t" style="left:225.3px;width:200px;text-align:right;top:308.33px;font-size:8.15px;color:#d3def2;">6,593,045</div>
<div class="t" style="left:269.3px;width:200px;text-align:right;top:308.33px;font-size:8.15px;color:#d3def2;">7,881,817</div>
<div class="t" style="left:314.70000000000005px;width:200px;text-align:right;top:308.33px;font-size:8.15px;color:#d3def2;">9,178,813</div>
<div class="t" style="left:360.70000000000005px;width:200px;text-align:right;top:308.33px;font-size:8.15px;color:#d3def2;">10,479,172</div>
<div class="t" style="left:407.30000000000007px;width:200px;text-align:right;top:308.33px;font-size:8.15px;color:#d3def2;">11,782,894</div>
<div class="t" style="left:455.30000000000007px;width:200px;text-align:right;top:308.33px;font-size:8.15px;color:#d3def2;">13,089,980</div>
<div class="t" style="left:502.1px;width:200px;text-align:right;top:308.33px;font-size:8.15px;color:#d3def2;">14,395,181</div>
<div class="t" style="left:548.7px;width:200px;text-align:right;top:308.33px;font-size:8.15px;color:#d3def2;">15,708,606</div>
<div class="t" style="left:594.7px;width:200px;text-align:right;top:308.33px;font-size:8.15px;color:#d3def2;">17,025,133</div>
<div class="t" style="left:643.7px;width:200px;text-align:right;top:308.33px;font-size:8.15px;color:#d3def2;">18,345,024</div>
<div class="t" style="left:689.7px;width:200px;text-align:right;top:308.33px;font-size:8.15px;color:#d3def2;">19,668,278</div>
<div class="t" style="left:738.7px;width:200px;text-align:right;top:308.33px;font-size:8.15px;color:#d3def2;">#########</div>
<div class="t" style="left:40.29999999999998px;width:200px;text-align:right;top:333.27px;font-size:8.15px;color:#3479bb;">-3,110</div>
<div class="t" style="left:85.69999999999999px;width:200px;text-align:right;top:333.27px;font-size:8.15px;color:#3479bb;">-3,110</div>
<div class="t" style="left:131.7px;width:200px;text-align:right;top:333.27px;font-size:8.15px;color:#3479bb;">-3,110</div>
<div class="t" style="left:179.7px;width:200px;text-align:right;top:333.27px;font-size:8.15px;color:#3479bb;">-3,110</div>
<div class="t" style="left:225.3px;width:200px;text-align:right;top:333.27px;font-size:8.15px;color:#3479bb;">-3,110</div>
<div class="t" style="left:269.3px;width:200px;text-align:right;top:333.27px;font-size:8.15px;color:#3479bb;">-3,110</div>
<div class="t" style="left:314.70000000000005px;width:200px;text-align:right;top:333.27px;font-size:8.15px;color:#3479bb;">-3,110</div>
<div class="t" style="left:360.70000000000005px;width:200px;text-align:right;top:333.27px;font-size:8.15px;color:#3479bb;">-3,110</div>
<div class="t" style="left:407.30000000000007px;width:200px;text-align:right;top:333.27px;font-size:8.15px;color:#3479bb;">-3,110</div>
<div class="t" style="left:455.30000000000007px;width:200px;text-align:right;top:333.27px;font-size:8.15px;color:#3479bb;">-3,110</div>
<div class="t" style="left:502.1px;width:200px;text-align:right;top:333.27px;font-size:8.15px;color:#3479bb;">-3,110</div>
<div class="t" style="left:548.7px;width:200px;text-align:right;top:333.27px;font-size:8.15px;color:#3479bb;">-3,110</div>
<div class="t" style="left:594.7px;width:200px;text-align:right;top:333.27px;font-size:8.15px;color:#3479bb;">-3,110</div>
<div class="t" style="left:643.7px;width:200px;text-align:right;top:333.27px;font-size:8.15px;color:#3479bb;">-3,110</div>
<div class="t" style="left:689.7px;width:200px;text-align:right;top:333.27px;font-size:8.15px;color:#3479bb;">-3,110</div>
<div class="t" style="left:40.29999999999998px;width:200px;text-align:right;top:358.20px;font-size:8.15px;color:#3479bb;">-321,638</div>
<div class="t" style="left:85.69999999999999px;width:200px;text-align:right;top:358.20px;font-size:8.15px;color:#3479bb;">-322,808</div>
<div class="t" style="left:131.7px;width:200px;text-align:right;top:358.20px;font-size:8.15px;color:#3479bb;">-322,808</div>
<div class="t" style="left:179.7px;width:200px;text-align:right;top:358.20px;font-size:8.15px;color:#3479bb;">-322,808</div>
<div class="t" style="left:225.3px;width:200px;text-align:right;top:358.20px;font-size:8.15px;color:#3479bb;">-339,093</div>
<div class="t" style="left:269.3px;width:200px;text-align:right;top:358.20px;font-size:8.15px;color:#3479bb;">-339,190</div>
<div class="t" style="left:314.70000000000005px;width:200px;text-align:right;top:358.20px;font-size:8.15px;color:#3479bb;">-340,405</div>
<div class="t" style="left:360.70000000000005px;width:200px;text-align:right;top:358.20px;font-size:8.15px;color:#3479bb;">-340,405</div>
<div class="t" style="left:407.30000000000007px;width:200px;text-align:right;top:358.20px;font-size:8.15px;color:#3479bb;">-340,405</div>
<div class="t" style="left:455.30000000000007px;width:200px;text-align:right;top:358.20px;font-size:8.15px;color:#3479bb;">-340,405</div>
<div class="t" style="left:502.1px;width:200px;text-align:right;top:358.20px;font-size:8.15px;color:#3479bb;">-339,093</div>
<div class="t" style="left:548.7px;width:200px;text-align:right;top:358.20px;font-size:8.15px;color:#3479bb;">-340,308</div>
<div class="t" style="left:594.7px;width:200px;text-align:right;top:358.20px;font-size:8.15px;color:#3479bb;">-340,308</div>
<div class="t" style="left:643.7px;width:200px;text-align:right;top:358.20px;font-size:8.15px;color:#3479bb;">-340,308</div>
<div class="t" style="left:689.7px;width:200px;text-align:right;top:358.20px;font-size:8.15px;color:#3479bb;">-340,308</div>
<div class="t" style="left:40.29999999999998px;width:200px;text-align:right;top:370.75px;font-size:8.15px;color:#ffffff;">-324,748</div>
<div class="t" style="left:85.69999999999999px;width:200px;text-align:right;top:370.75px;font-size:8.15px;color:#ffffff;">-325,918</div>
<div class="t" style="left:131.7px;width:200px;text-align:right;top:370.75px;font-size:8.15px;color:#ffffff;">-325,918</div>
<div class="t" style="left:179.7px;width:200px;text-align:right;top:370.75px;font-size:8.15px;color:#ffffff;">-325,918</div>
<div class="t" style="left:225.3px;width:200px;text-align:right;top:370.75px;font-size:8.15px;color:#ffffff;">-342,203</div>
<div class="t" style="left:269.3px;width:200px;text-align:right;top:370.75px;font-size:8.15px;color:#ffffff;">-342,300</div>
<div class="t" style="left:314.70000000000005px;width:200px;text-align:right;top:370.75px;font-size:8.15px;color:#ffffff;">-343,515</div>
<div class="t" style="left:360.70000000000005px;width:200px;text-align:right;top:370.75px;font-size:8.15px;color:#ffffff;">-343,515</div>
<div class="t" style="left:407.30000000000007px;width:200px;text-align:right;top:370.75px;font-size:8.15px;color:#ffffff;">-343,515</div>
<div class="t" style="left:455.30000000000007px;width:200px;text-align:right;top:370.75px;font-size:8.15px;color:#ffffff;">-343,515</div>
<div class="t" style="left:502.1px;width:200px;text-align:right;top:370.75px;font-size:8.15px;color:#ffffff;">-342,203</div>
<div class="t" style="left:548.7px;width:200px;text-align:right;top:370.75px;font-size:8.15px;color:#ffffff;">-343,418</div>
<div class="t" style="left:594.7px;width:200px;text-align:right;top:370.75px;font-size:8.15px;color:#ffffff;">-343,418</div>
<div class="t" style="left:643.7px;width:200px;text-align:right;top:370.75px;font-size:8.15px;color:#ffffff;">-343,418</div>
<div class="t" style="left:689.7px;width:200px;text-align:right;top:370.75px;font-size:8.15px;color:#ffffff;">-343,418</div>
<div class="t" style="left:738.7px;width:200px;text-align:right;top:370.75px;font-size:8.15px;color:#ffffff;">-4,046,689</div>
<div class="t" style="left:40.29999999999998px;width:200px;text-align:right;top:395.37px;font-size:8.15px;color:#3479bb;">-450,000</div>
<div class="t" style="left:85.69999999999999px;width:200px;text-align:right;top:395.37px;font-size:8.15px;color:#3479bb;">-433,182</div>
<div class="t" style="left:131.7px;width:200px;text-align:right;top:395.37px;font-size:8.15px;color:#3479bb;">-416,364</div>
<div class="t" style="left:179.7px;width:200px;text-align:right;top:395.37px;font-size:8.15px;color:#3479bb;">-399,546</div>
<div class="t" style="left:225.3px;width:200px;text-align:right;top:395.37px;font-size:8.15px;color:#3479bb;">-382,728</div>
<div class="t" style="left:269.3px;width:200px;text-align:right;top:395.37px;font-size:8.15px;color:#3479bb;">-365,910</div>
<div class="t" style="left:314.70000000000005px;width:200px;text-align:right;top:395.37px;font-size:8.15px;color:#3479bb;">-349,092</div>
<div class="t" style="left:360.70000000000005px;width:200px;text-align:right;top:395.37px;font-size:8.15px;color:#3479bb;">-332,274</div>
<div class="t" style="left:407.30000000000007px;width:200px;text-align:right;top:395.37px;font-size:8.15px;color:#3479bb;">-315,456</div>
<div class="t" style="left:455.30000000000007px;width:200px;text-align:right;top:395.37px;font-size:8.15px;color:#3479bb;">-298,638</div>
<div class="t" style="left:502.1px;width:200px;text-align:right;top:395.37px;font-size:8.15px;color:#3479bb;">-281,820</div>
<div class="t" style="left:548.7px;width:200px;text-align:right;top:395.37px;font-size:8.15px;color:#3479bb;">-265,002</div>
<div class="t" style="left:594.7px;width:200px;text-align:right;top:395.37px;font-size:8.15px;color:#3479bb;">-248,184</div>
<div class="t" style="left:643.7px;width:200px;text-align:right;top:395.37px;font-size:8.15px;color:#3479bb;">-231,366</div>
<div class="t" style="left:689.7px;width:200px;text-align:right;top:395.37px;font-size:8.15px;color:#3479bb;">-214,548</div>
<div class="t" style="left:738.7px;width:200px;text-align:right;top:395.37px;font-size:8.15px;color:#3479bb;">-4,290,012</div>
<div class="t" style="left:40.29999999999998px;width:200px;text-align:right;top:444.20px;font-size:8.15px;color:#3479bb;">-450,000</div>
<div class="t" style="left:85.69999999999999px;width:200px;text-align:right;top:444.20px;font-size:8.15px;color:#3479bb;">-433,182</div>
<div class="t" style="left:131.7px;width:200px;text-align:right;top:444.20px;font-size:8.15px;color:#3479bb;">-416,364</div>
<div class="t" style="left:179.7px;width:200px;text-align:right;top:444.20px;font-size:8.15px;color:#3479bb;">-399,546</div>
<div class="t" style="left:225.3px;width:200px;text-align:right;top:444.20px;font-size:8.15px;color:#3479bb;">-382,728</div>
<div class="t" style="left:269.3px;width:200px;text-align:right;top:444.20px;font-size:8.15px;color:#3479bb;">-365,910</div>
<div class="t" style="left:314.70000000000005px;width:200px;text-align:right;top:444.20px;font-size:8.15px;color:#3479bb;">-349,092</div>
<div class="t" style="left:360.70000000000005px;width:200px;text-align:right;top:444.20px;font-size:8.15px;color:#3479bb;">-332,274</div>
<div class="t" style="left:407.30000000000007px;width:200px;text-align:right;top:444.20px;font-size:8.15px;color:#3479bb;">-315,456</div>
<div class="t" style="left:455.30000000000007px;width:200px;text-align:right;top:444.20px;font-size:8.15px;color:#3479bb;">-298,638</div>
<div class="t" style="left:502.1px;width:200px;text-align:right;top:444.20px;font-size:8.15px;color:#3479bb;">-281,820</div>
<div class="t" style="left:548.7px;width:200px;text-align:right;top:444.20px;font-size:8.15px;color:#3479bb;">-265,002</div>
<div class="t" style="left:594.7px;width:200px;text-align:right;top:444.20px;font-size:8.15px;color:#3479bb;">-248,184</div>
<div class="t" style="left:643.7px;width:200px;text-align:right;top:444.20px;font-size:8.15px;color:#3479bb;">-231,366</div>
<div class="t" style="left:689.7px;width:200px;text-align:right;top:444.20px;font-size:8.15px;color:#3479bb;">-214,548</div>
<div class="t" style="left:40.29999999999998px;width:200px;text-align:right;top:456.70px;font-size:8.15px;color:#3479bb;">-771,638</div>
<div class="t" style="left:85.69999999999999px;width:200px;text-align:right;top:456.70px;font-size:8.15px;color:#3479bb;">-755,990</div>
<div class="t" style="left:131.7px;width:200px;text-align:right;top:456.70px;font-size:8.15px;color:#3479bb;">-739,172</div>
<div class="t" style="left:179.7px;width:200px;text-align:right;top:456.70px;font-size:8.15px;color:#3479bb;">-722,354</div>
<div class="t" style="left:225.3px;width:200px;text-align:right;top:456.70px;font-size:8.15px;color:#3479bb;">-721,821</div>
<div class="t" style="left:269.3px;width:200px;text-align:right;top:456.70px;font-size:8.15px;color:#3479bb;">-705,100</div>
<div class="t" style="left:314.70000000000005px;width:200px;text-align:right;top:456.70px;font-size:8.15px;color:#3479bb;">-689,497</div>
<div class="t" style="left:360.70000000000005px;width:200px;text-align:right;top:456.70px;font-size:8.15px;color:#3479bb;">-672,679</div>
<div class="t" style="left:407.30000000000007px;width:200px;text-align:right;top:456.70px;font-size:8.15px;color:#3479bb;">-655,861</div>
<div class="t" style="left:455.30000000000007px;width:200px;text-align:right;top:456.70px;font-size:8.15px;color:#3479bb;">-639,043</div>
<div class="t" style="left:502.1px;width:200px;text-align:right;top:456.70px;font-size:8.15px;color:#3479bb;">-620,913</div>
<div class="t" style="left:548.7px;width:200px;text-align:right;top:456.70px;font-size:8.15px;color:#3479bb;">-605,310</div>
<div class="t" style="left:594.7px;width:200px;text-align:right;top:456.70px;font-size:8.15px;color:#3479bb;">-588,492</div>
<div class="t" style="left:643.7px;width:200px;text-align:right;top:456.70px;font-size:8.15px;color:#3479bb;">-571,674</div>
<div class="t" style="left:689.7px;width:200px;text-align:right;top:456.70px;font-size:8.15px;color:#3479bb;">-554,856</div>
<div class="t" style="left:40.29999999999998px;width:200px;text-align:right;top:469.20px;font-size:8.15px;color:#3479bb;">896,926</div>
<div class="t" style="left:85.69999999999999px;width:200px;text-align:right;top:469.20px;font-size:8.15px;color:#3479bb;">2,122,364</div>
<div class="t" style="left:131.7px;width:200px;text-align:right;top:469.20px;font-size:8.15px;color:#3479bb;">3,352,336</div>
<div class="t" style="left:179.7px;width:200px;text-align:right;top:469.20px;font-size:8.15px;color:#3479bb;">4,585,672</div>
<div class="t" style="left:225.3px;width:200px;text-align:right;top:469.20px;font-size:8.15px;color:#3479bb;">5,871,224</div>
<div class="t" style="left:269.3px;width:200px;text-align:right;top:469.20px;font-size:8.15px;color:#3479bb;">7,176,717</div>
<div class="t" style="left:314.70000000000005px;width:200px;text-align:right;top:469.20px;font-size:8.15px;color:#3479bb;">8,489,315</div>
<div class="t" style="left:360.70000000000005px;width:200px;text-align:right;top:469.20px;font-size:8.15px;color:#3479bb;">9,806,492</div>
<div class="t" style="left:407.30000000000007px;width:200px;text-align:right;top:469.20px;font-size:8.15px;color:#3479bb;">11,127,033</div>
<div class="t" style="left:455.30000000000007px;width:200px;text-align:right;top:469.20px;font-size:8.15px;color:#3479bb;">12,450,937</div>
<div class="t" style="left:502.1px;width:200px;text-align:right;top:469.20px;font-size:8.15px;color:#3479bb;">13,774,268</div>
<div class="t" style="left:548.7px;width:200px;text-align:right;top:469.20px;font-size:8.15px;color:#3479bb;">15,103,296</div>
<div class="t" style="left:594.7px;width:200px;text-align:right;top:469.20px;font-size:8.15px;color:#3479bb;">16,436,641</div>
<div class="t" style="left:643.7px;width:200px;text-align:right;top:469.20px;font-size:8.15px;color:#3479bb;">17,773,350</div>
<div class="t" style="left:689.7px;width:200px;text-align:right;top:469.20px;font-size:8.15px;color:#3479bb;">19,113,422</div>
<div class="t" style="left:738.7px;width:200px;text-align:right;top:469.20px;font-size:8.15px;color:#3479bb;">94,756,582</div>
<div class="t" style="left:40.29999999999998px;width:200px;text-align:right;top:494.30px;font-size:8.15px;color:#3479bb;">896,926</div>
<div class="t" style="left:85.69999999999999px;width:200px;text-align:right;top:494.30px;font-size:8.15px;color:#3479bb;">2,122,364</div>
<div class="t" style="left:131.7px;width:200px;text-align:right;top:494.30px;font-size:8.15px;color:#3479bb;">3,352,336</div>
<div class="t" style="left:179.7px;width:200px;text-align:right;top:494.30px;font-size:8.15px;color:#3479bb;">4,585,672</div>
<div class="t" style="left:225.3px;width:200px;text-align:right;top:494.30px;font-size:8.15px;color:#3479bb;">5,871,224</div>
<div class="t" style="left:269.3px;width:200px;text-align:right;top:494.30px;font-size:8.15px;color:#3479bb;">7,176,717</div>
<div class="t" style="left:314.70000000000005px;width:200px;text-align:right;top:494.30px;font-size:8.15px;color:#3479bb;">8,489,315</div>
<div class="t" style="left:360.70000000000005px;width:200px;text-align:right;top:494.30px;font-size:8.15px;color:#3479bb;">9,806,492</div>
<div class="t" style="left:407.30000000000007px;width:200px;text-align:right;top:494.30px;font-size:8.15px;color:#3479bb;">11,127,033</div>
<div class="t" style="left:455.30000000000007px;width:200px;text-align:right;top:494.30px;font-size:8.15px;color:#3479bb;">12,450,937</div>
<div class="t" style="left:502.1px;width:200px;text-align:right;top:494.30px;font-size:8.15px;color:#3479bb;">13,774,268</div>
<div class="t" style="left:548.7px;width:200px;text-align:right;top:494.30px;font-size:8.15px;color:#3479bb;">15,103,296</div>
<div class="t" style="left:594.7px;width:200px;text-align:right;top:494.30px;font-size:8.15px;color:#3479bb;">16,436,641</div>
<div class="t" style="left:643.7px;width:200px;text-align:right;top:494.30px;font-size:8.15px;color:#3479bb;">17,773,350</div>
<div class="t" style="left:689.7px;width:200px;text-align:right;top:494.30px;font-size:8.15px;color:#3479bb;">19,113,422</div>
<div class="t" style="left:40.29999999999998px;width:200px;text-align:right;top:506.85px;font-size:8.15px;color:#3479bb;">896,926</div>
<div class="t" style="left:85.69999999999999px;width:200px;text-align:right;top:506.85px;font-size:8.15px;color:#3479bb;">2,122,364</div>
<div class="t" style="left:131.7px;width:200px;text-align:right;top:506.85px;font-size:8.15px;color:#3479bb;">3,352,336</div>
<div class="t" style="left:179.7px;width:200px;text-align:right;top:506.85px;font-size:8.15px;color:#3479bb;">4,585,672</div>
<div class="t" style="left:225.3px;width:200px;text-align:right;top:506.85px;font-size:8.15px;color:#3479bb;">5,871,224</div>
<div class="t" style="left:269.3px;width:200px;text-align:right;top:506.85px;font-size:8.15px;color:#3479bb;">7,176,717</div>
<div class="t" style="left:314.70000000000005px;width:200px;text-align:right;top:506.85px;font-size:8.15px;color:#3479bb;">8,489,315</div>
<div class="t" style="left:360.70000000000005px;width:200px;text-align:right;top:506.85px;font-size:8.15px;color:#3479bb;">9,806,492</div>
<div class="t" style="left:407.30000000000007px;width:200px;text-align:right;top:506.85px;font-size:8.15px;color:#3479bb;">11,127,033</div>
<div class="t" style="left:455.30000000000007px;width:200px;text-align:right;top:506.85px;font-size:8.15px;color:#3479bb;">12,450,937</div>
<div class="t" style="left:502.1px;width:200px;text-align:right;top:506.85px;font-size:8.15px;color:#3479bb;">13,774,268</div>
<div class="t" style="left:548.7px;width:200px;text-align:right;top:506.85px;font-size:8.15px;color:#3479bb;">15,103,296</div>
<div class="t" style="left:594.7px;width:200px;text-align:right;top:506.85px;font-size:8.15px;color:#3479bb;">16,436,641</div>
<div class="t" style="left:643.7px;width:200px;text-align:right;top:506.85px;font-size:8.15px;color:#3479bb;">17,773,350</div>
<div class="t" style="left:689.7px;width:200px;text-align:right;top:506.85px;font-size:8.15px;color:#3479bb;">19,113,422</div>
<div class="a" style="left:199px;top:477.60px;width:743px;height:0;border-top:1px dotted #8f8f8f"></div>
<div class="a" style="left:337px;top:211px;width:2px;height:1px;background:#a0a0a0"></div>
<div class="a" style="left:429px;top:211px;width:2px;height:1px;background:#a0a0a0"></div>
<div class="a" style="left:800px;top:211px;width:2px;height:1px;background:#a0a0a0"></div>
<div class="a" style="left:848px;top:211px;width:2px;height:1px;background:#a0a0a0"></div>
<div class="a" style="left:385px;top:410px;width:2px;height:1.5px;background:#c8c8c8"></div>
<div class="a" style="left:987.5px;top:47.5px;width:12.5px;height:512.5px;background:#fafafa;border-left:1px solid #e6e6e6"></div>
<svg class="a" style="left:990px;top:53px" width="8" height="6" viewBox="0 0 8 6"><path d="M4 1 L7 5 L1 5 Z" fill="#606060"/></svg>
<div class="a" style="left:991px;top:63px;width:6.4px;height:129.2px;background:#747474;border-radius:3px"></div>
<div class="a" style="left:0;top:560px;width:1000px;height:18px;background:#e9ebee"></div>
<svg class="a" style="left:15px;top:565px" width="6" height="8" viewBox="0 0 6 8"><path d="M4.5 1 L1.5 4 L4.5 7" fill="none" stroke="#b4b4b4" stroke-width="1"/></svg>
<svg class="a" style="left:36px;top:565px" width="6" height="8" viewBox="0 0 6 8"><path d="M1.5 1 L4.5 4 L1.5 7" fill="none" stroke="#505050" stroke-width="1"/></svg>
<div class="a" style="left:166px;top:559.5px;width:46.5px;height:19px;background:#ffffff"></div>
<div class="a" style="left:174px;top:574.5px;width:33.5px;height:1.5px;background:#217346"></div>
<div class="t n" style="left:80px;top:566.8px;font-size:8.5px;color:#303030;">IS 2025</div>
<div class="t n" style="left:125px;top:566.8px;font-size:8.5px;color:#303030;">CF 2025</div>
<div class="t n" style="left:175px;top:566.8px;font-size:8.5px;font-weight:bold;color:#1a1a1a;">BS 2025</div>
<div class="t n" style="left:223.5px;top:566.8px;font-size:8.5px;color:#303030;">Inputs</div>
<div class="t n" style="left:267.5px;top:566.8px;font-size:8.85px;color:#303030;">Statements Summary 2025</div>
<div class="t n" style="left:393.5px;top:566.8px;font-size:8.5px;color:#303030;">IS 2026</div>
<div class="t n" style="left:439px;top:566.8px;font-size:8.5px;color:#303030;">CF 2026</div>
<div class="t n" style="left:488.5px;top:566.8px;font-size:8.5px;color:#303030;">BS 2026</div>
<div class="t n" style="left:539px;top:566.8px;font-size:8.85px;color:#303030;">Statements Summary 2026</div>
<div class="t n" style="left:666px;top:566.8px;font-size:8.5px;color:#303030;">IS 2027</div>
<div class="t n" style="left:711px;top:566.8px;font-size:8.5px;color:#303030;">CF 2027</div>
<div class="t n" style="left:760px;top:566.8px;font-size:8.5px;color:#303030;">BS 2027</div>
<div class="a" style="left:810px;top:560px;width:70px;height:18px;overflow:hidden"><div class="t" style="left:0;top:6.8px;font-size:8.5px;color:#303030">Statements Summary 2027</div></div>
<svg class="a" style="left:885px;top:568px" width="10" height="4" viewBox="0 0 10 4"><circle cx="1.6" cy="2" r="1.1" fill="#333"/><circle cx="5" cy="2" r="1.1" fill="#333"/><circle cx="8.4" cy="2" r="1.1" fill="#333"/></svg>
<svg class="a" style="left:906px;top:564px" width="10" height="10" viewBox="0 0 10 10"><path d="M5 1 V9 M1 5 H9" stroke="#404040" stroke-width="1"/></svg>
<svg class="a" style="left:930px;top:564px" width="4" height="10" viewBox="0 0 4 10"><circle cx="2" cy="2" r="0.8" fill="#404040"/><circle cx="2" cy="5" r="0.8" fill="#404040"/><circle cx="2" cy="8" r="0.8" fill="#404040"/></svg>
<svg class="a" style="left:945px;top:565px" width="6" height="8" viewBox="0 0 6 8"><path d="M5 1 L1 4 L5 7 Z" fill="#505050"/></svg>
<div class="a" style="left:953.5px;top:566.5px;width:19px;height:5px;border-radius:2.5px;background:#6a6a6a"></div>
<svg class="a" style="left:980px;top:565px" width="6" height="8" viewBox="0 0 6 8"><path d="M1 1 L5 4 L1 7 Z" fill="#505050"/></svg>
<svg class="a" style="left:989px;top:554px" width="8" height="6" viewBox="0 0 8 6"><path d="M1 1 L7 1 L4 5 Z" fill="#606060"/></svg>
<div class="a" style="left:0;top:577.8px;width:1000px;height:16.2px;background:#f3f3f3;border-top:2px solid #dcdcdc"></div>
<div class="t" style="left:7.5px;top:585.3px;font-size:6.4px;color:#444">Ready</div>
<svg class="a" style="left:39px;top:583px" width="10" height="10" viewBox="0 0 10 10"><rect x="1" y="1" width="8" height="8" fill="none" stroke="#444" stroke-width="1"/><line x1="1" y1="4" x2="9" y2="4" stroke="#444" stroke-width="0.8"/><circle cx="6" cy="6.5" r="1.5" fill="none" stroke="#444" stroke-width="0.8"/></svg>
<svg class="a" style="left:60px;top:582.5px" width="11" height="11" viewBox="0 0 11 11"><circle cx="5.5" cy="2" r="1.2" fill="none" stroke="#444" stroke-width="0.8"/><path d="M1 4 H10 M5.5 4 V7 L3 10 M5.5 7 L8 10" fill="none" stroke="#444" stroke-width="0.8"/></svg>
<div class="t" style="left:71.5px;top:585.3px;font-size:6.6px;font-weight:bold;color:#333">Accessibility: Investigate</div>
<div class="a" style="left:807.5px;top:579px;width:23.5px;height:15px;background:#dcdcdc"></div>
<svg class="a" style="left:814px;top:581.5px" width="10" height="10" viewBox="0 0 10 10"><rect x="1" y="1" width="8" height="8" fill="none" stroke="#444" stroke-width="0.9"/><path d="M1 3.7 H9 M1 6.3 H9 M3.7 1 V9 M6.3 1 V9" stroke="#444" stroke-width="0.8"/></svg>
<svg class="a" style="left:840.5px;top:581.5px" width="11" height="10" viewBox="0 0 11 10"><rect x="1" y="1" width="9" height="8" fill="none" stroke="#444" stroke-width="0.9"/><path d="M3.5 1 V9 M5.5 1 V9 M7.5 1 V9" stroke="#444" stroke-width="0.8"/></svg>
<svg class="a" style="left:866.5px;top:581.5px" width="11" height="10" viewBox="0 0 11 10"><rect x="1" y="1" width="9" height="8" fill="none" stroke="#444" stroke-width="0.9"/><path d="M3.5 1 V5 H7.5 V1" fill="none" stroke="#444" stroke-width="0.9"/></svg>
<div class="a" style="left:889px;top:586px;width:4px;height:1px;background:#444"></div>
<div class="a" style="left:897px;top:586px;width:68px;height:1px;background:#9a9a9a"></div>
<div class="a" style="left:928.5px;top:582.5px;width:2.5px;height:8px;background:#444"></div>
<svg class="a" style="left:964px;top:582.5px" width="7" height="7" viewBox="0 0 7 7"><path d="M3.5 0.5 V6.5 M0.5 3.5 H6.5" stroke="#444" stroke-width="0.9"/></svg>
<div class="t" style="left:977px;top:584px;font-size:6.6px;color:#444">100%</div>
</body></html>
